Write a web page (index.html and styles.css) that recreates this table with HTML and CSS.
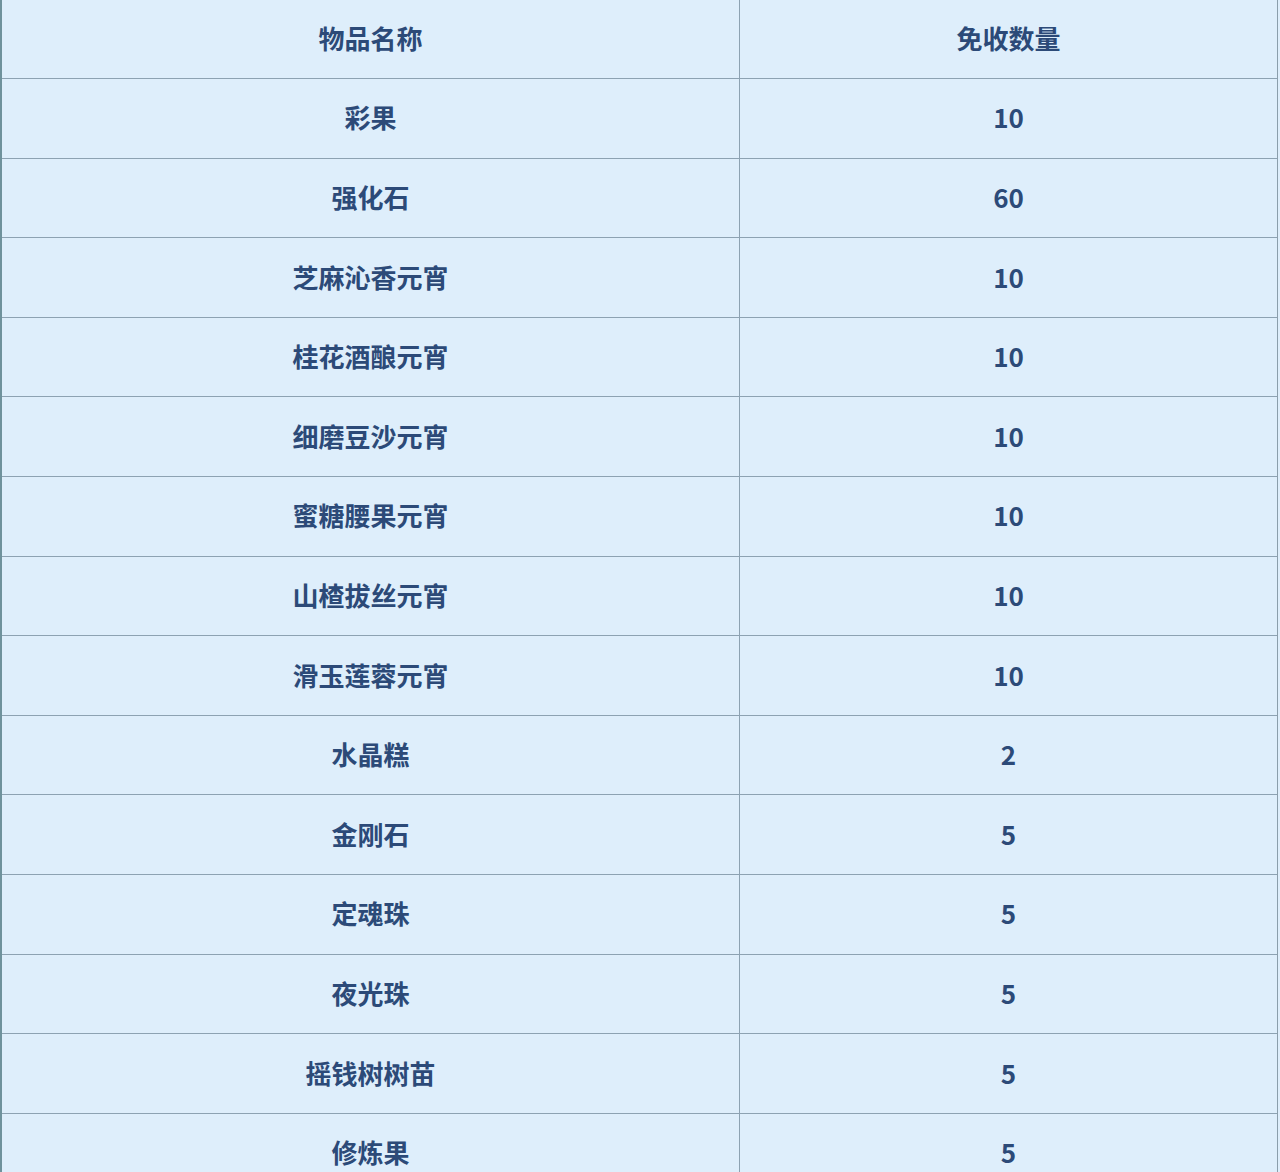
FILE: index.html
```html
<!DOCTYPE html>
<html lang="zh-CN">
<head>
<meta charset="utf-8">
<title>物品免收数量</title>
<link rel="stylesheet" href="styles.css">
</head>
<body>
<div class="table">
  <div class="row head"><div class="cell name">物品名称</div><div class="cell num">免收数量</div></div>
  <div class="row"><div class="cell name">彩果</div><div class="cell num">10</div></div>
  <div class="row"><div class="cell name">强化石</div><div class="cell num">60</div></div>
  <div class="row"><div class="cell name">芝麻沁香元宵</div><div class="cell num">10</div></div>
  <div class="row"><div class="cell name">桂花酒酿元宵</div><div class="cell num">10</div></div>
  <div class="row"><div class="cell name">细磨豆沙元宵</div><div class="cell num">10</div></div>
  <div class="row"><div class="cell name">蜜糖腰果元宵</div><div class="cell num">10</div></div>
  <div class="row"><div class="cell name">山楂拔丝元宵</div><div class="cell num">10</div></div>
  <div class="row"><div class="cell name">滑玉莲蓉元宵</div><div class="cell num">10</div></div>
  <div class="row"><div class="cell name">水晶糕</div><div class="cell num">2</div></div>
  <div class="row"><div class="cell name">金刚石</div><div class="cell num">5</div></div>
  <div class="row"><div class="cell name">定魂珠</div><div class="cell num">5</div></div>
  <div class="row"><div class="cell name">夜光珠</div><div class="cell num">5</div></div>
  <div class="row"><div class="cell name">摇钱树树苗</div><div class="cell num">5</div></div>
  <div class="row"><div class="cell name">修炼果</div><div class="cell num">5</div></div>
</div>
</body>
</html>
```

FILE: styles.css
```css
html, body {
  margin: 0;
  padding: 0;
  background: #deeefb;
  height: 1172px;
  overflow: hidden;
}
.table {
  width: 1275px;
  border-left: 2px solid #6f929c;
  border-right: 1px solid #8b9eab;
  font-family: "Noto Sans CJK SC", "Noto Sans", sans-serif;
  font-weight: 700;
  font-size: 26px;
  color: #2c4a78;
}
.row {
  display: flex;
  height: 78.615px;
  border-bottom: 1px solid #8da2b2;
}
.row.head {
  height: 78px;
}
.cell {
  display: flex;
  align-items: center;
  justify-content: center;
  padding-bottom: 3px;
  box-sizing: border-box;
}
.name {
  width: 738px;
  border-right: 1px solid #8da2b2;
}
.num {
  flex: 1;
  font-size: 26px;
}
```
